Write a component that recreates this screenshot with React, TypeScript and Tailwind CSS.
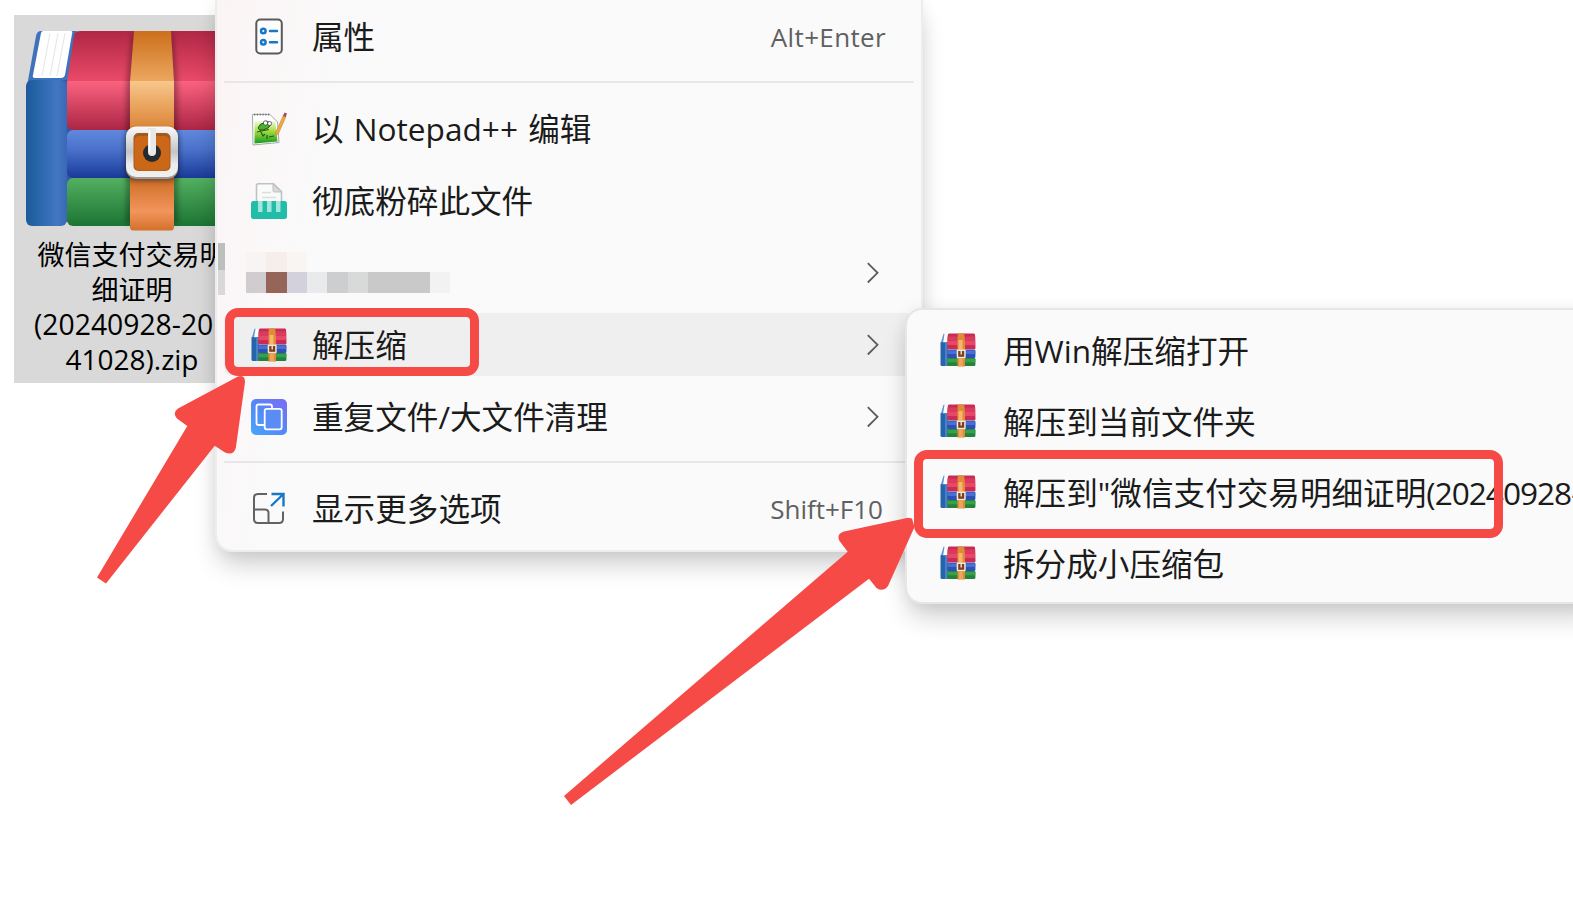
import { ReactNode } from "react";
import clsx from "clsx";

type IconProps = {
  className?: string;
};

type MenuRowProps = {
  icon: ReactNode;
  children: ReactNode;
  shortcut?: ReactNode;
  submenu?: boolean;
  active?: boolean;
};

const ArchiveLarge = () => (
  <svg width="212" height="200" viewBox="26 31 212 200" className="block">
    <defs>
      <linearGradient id="lg-spine" x1="0" x2="1" y1="0" y2="0">
        <stop offset="0" stopColor="#1c5a9c" />
        <stop offset="0.35" stopColor="#2a68ad" />
        <stop offset="0.75" stopColor="#4376c2" />
        <stop offset="1" stopColor="#3a69b4" />
      </linearGradient>
      <linearGradient id="lg-red-top" x1="0" x2="0" y1="0" y2="1">
        <stop offset="0" stopColor="#b02746" />
        <stop offset="1" stopColor="#ea4b68" />
      </linearGradient>
      <linearGradient id="lg-red" x1="0" x2="0" y1="0" y2="1">
        <stop offset="0" stopColor="#fb637f" />
        <stop offset="1" stopColor="#ac2545" />
      </linearGradient>
      <linearGradient id="lg-blue" x1="0" x2="0" y1="0" y2="1">
        <stop offset="0" stopColor="#6088dc" />
        <stop offset="0.4" stopColor="#4a72cc" />
        <stop offset="1" stopColor="#1a3a9a" />
      </linearGradient>
      <linearGradient id="lg-green" x1="0" x2="0" y1="0" y2="1">
        <stop offset="0" stopColor="#53b061" />
        <stop offset="1" stopColor="#1c7433" />
      </linearGradient>
      <linearGradient id="lg-band-top" x1="0" x2="0" y1="0" y2="1">
        <stop offset="0" stopColor="#cc6f1c" />
        <stop offset="1" stopColor="#eca860" />
      </linearGradient>
      <linearGradient id="lg-band" x1="0" x2="0" y1="0" y2="1">
        <stop offset="0" stopColor="#f9c68c" />
        <stop offset="1" stopColor="#d98232" />
      </linearGradient>
      <linearGradient id="lg-band-low" x1="0" x2="0" y1="0" y2="1">
        <stop offset="0" stopColor="#cc6a22" />
        <stop offset="0.65" stopColor="#f2955c" />
        <stop offset="1" stopColor="#d4702a" />
      </linearGradient>
      <linearGradient id="lg-buckle" x1="0" x2="0" y1="0" y2="1">
        <stop offset="0" stopColor="#fafafa" />
        <stop offset="0.5" stopColor="#c4c4c4" />
        <stop offset="0.75" stopColor="#ececec" />
        <stop offset="1" stopColor="#f0f0f0" />
      </linearGradient>
      <filter id="lg-soft" x="-30%" y="-30%" width="160%" height="160%">
        <feGaussianBlur stdDeviation="2.5" />
      </filter>
    </defs>
    <path d="M41 31H77L72 90L66 222L60 226L27 86L36 36Q37 31 41 31Z" fill="#3f72bd" />
    <path d="M60 80H76V222H60Z" fill="#2f5aa8" />
    <rect x="26" y="80" width="41" height="146" rx="6" fill="url(#lg-spine)" />
    <path d="M43 31H71Q73 31 72 34L65 75Q64 78 61 78H35Q32 78 33 75L41 33Q42 31 43 31Z" fill="#fff" />
    <path d="M50 33L42 76M58 33L50 76M65 33L57 76" stroke="#e4e4ea" strokeWidth="1" />
    <path d="M80 31H238V82H67L74 36Q75 31 80 31Z" fill="url(#lg-red-top)" />
    <path d="M67 81H238V130H73Q67 130 67 123Z" fill="url(#lg-red)" />
    <rect x="67" y="130" width="171" height="48" rx="6" fill="url(#lg-blue)" />
    <rect x="67" y="178" width="171" height="48" rx="6" fill="url(#lg-green)" />
    <path d="M132 33H173L178 82V224H126V82Z" fill="#000" opacity="0.28" filter="url(#lg-soft)" />
    <path d="M134 31H171L174 82H130Z" fill="url(#lg-band-top)" />
    <rect x="130" y="81" width="44" height="50" fill="url(#lg-band)" />
    <path d="M130 176H174V227Q174 230.500 171 230.500H133Q130 230.500 130 227Z" fill="url(#lg-band-low)" />
    <rect x="125" y="130" width="54" height="51" rx="10" fill="#222" opacity="0.55" filter="url(#lg-soft)" />
    <rect x="126" y="127" width="52" height="52" rx="10" fill="#9a9a9a" />
    <rect x="126" y="126.500" width="52" height="50.500" rx="10" fill="url(#lg-buckle)" />
    <rect x="133.500" y="133" width="37" height="38" rx="5" fill="#a35a22" />
    <rect x="134.500" y="136" width="35" height="34.500" rx="5" fill="#cb6817" />
    <circle cx="152" cy="153" r="9" fill="#242a30" />
    <path d="M148 128H156V152A4 4 0 0 1 148 152Z" fill="#e8e8e8" />
    <path d="M149.500 130V152" stroke="#fff" strokeWidth="1.500" />
  </svg>
);

const ArchiveIcon = ({ className }: IconProps) => (
  <svg width="36" height="34" viewBox="0 0 36 34" className={className}>
    <path d="M2.700 9.500L4.600 1H9.500L7.500 10Z" fill="#fdfeff" />
    <path d="M0.800 10L3.500 0.800H4.500L3 10Z" fill="#5c93cf" />
    <path d="M0.500 9.300H8V33H2Q0.500 33 0.500 31.500Z" fill="#2465ae" />
    <path d="M5 9.300H8V33H5Z" fill="#4c80c4" />
    <path d="M9 0.500H34Q35 0.500 35 2L35.500 15Q35.500 16.500 34 16.500H9Q7.200 16.500 7.200 15L7.800 2Q8 0.500 9 0.500Z" fill="#c82c54" />
    <path d="M7.400 7.500H35.200V12H7.300Z" fill="#e84767" />
    <path d="M7.600 3.500H35.200V7.500H7.400Z" fill="#da3a5c" />
    <rect x="7.200" y="16.700" width="28.200" height="8.400" rx="1.300" fill="#2c50b4" />
    <rect x="7.500" y="17.500" width="27.800" height="3.500" fill="#4670d4" />
    <rect x="7.200" y="25" width="28.200" height="8" rx="1.300" fill="#23833c" />
    <rect x="7.500" y="25.800" width="27.800" height="3.500" fill="#36a04b" />
    <path d="M17.800 0.500H24.200L25 9V33.500H17.400V9Z" fill="#e28b37" />
    <path d="M18.600 7H22.500V16.500H18.600Z" fill="#f7b56d" />
    <path d="M19 26H22.800V33H19Z" fill="#f1a35d" />
    <rect x="16.700" y="16.600" width="9" height="8.600" rx="1" fill="#f4e8da" />
    <rect x="18.200" y="18" width="6" height="5.800" fill="#7d3f1c" />
    <path d="M21.200 17.500V21.500" stroke="#efe7de" strokeWidth="1.400" />
  </svg>
);

const PropertiesIcon = () => (
  <svg width="36" height="38" viewBox="0 0 36 38" fill="none">
    <rect x="5.300" y="1.500" width="25.500" height="34" rx="4" fill="#fdfdfd" stroke="#5a5a5a" strokeWidth="2" />
    <g stroke="#1878c8" strokeWidth="2.500">
      <circle cx="12.300" cy="13" r="2.300" />
      <circle cx="12.300" cy="24.200" r="2.300" />
      <path d="M19 13H26M19 24.200H26" strokeLinecap="round" />
    </g>
  </svg>
);

const NotepadIcon = () => (
  <svg width="36" height="36" viewBox="0 0 36 36" fill="none">
    <defs>
      <linearGradient id="np-grass" x1="0" x2="0" y1="0" y2="1">
        <stop offset="0" stopColor="#f4fae0" />
        <stop offset="0.45" stopColor="#a7dc3f" />
        <stop offset="1" stopColor="#159a22" />
      </linearGradient>
    </defs>
    <path d="M1.500 3.500H19L26.500 11L28 31.500L2 34Z" fill="#fff" stroke="#a3a8ad" />
    <path d="M3 3.500H19" stroke="#777" strokeWidth="1.800" strokeDasharray="1.200 1.600" />
    <path d="M3.500 10H24.500L26.500 30.500L3.500 32.500Z" fill="url(#np-grass)" />
    <path d="M7 17Q9 12 13 12L15 10L19 12Q20 15 17 17L12 19Q8 20 7 17Z" fill="#48b52d" stroke="#24551b" />
    <circle cx="14.500" cy="12" r="2.200" fill="#fff" stroke="#333" strokeWidth="0.700" />
    <circle cx="18.600" cy="12.500" r="2" fill="#fff" stroke="#333" strokeWidth="0.700" />
    <path d="M6 21L18 18.500M9 19L12 25L14 23M16 24V28M18 26L23 25" stroke="#1f601b" strokeWidth="1.200" />
    <path d="M24.500 22L32.500 4L35 5.500L27.500 22.500L25 25Z" fill="#f1a93a" stroke="#b98845" strokeWidth="0.600" />
    <path d="M32 5L33.500 1.500L36 2.500L34.600 6Z" fill="#a04c58" />
  </svg>
);

const ShredIcon = () => (
  <svg width="36" height="36" viewBox="0 0 36 36" fill="none">
    <path d="M5.500 19V2.500Q5.500 0.800 7.200 0.800H22.500L30.500 8.500V19Z" fill="#fafafa" stroke="#bfc2c2" strokeWidth="1.600" />
    <path d="M22 1V7.500Q22 9 23.500 9H30.500Z" fill="#d8dada" stroke="#bfc2c2" />
    <path d="M11 9.500H20M11 14.500H25" stroke="#dcdede" strokeWidth="1.500" />
    <rect y="18" width="36" height="18" rx="2.500" fill="#22bda9" />
    <path d="M7 18H11.500V29H7ZM16 18H20.500V29H16ZM25 18H29.500V29H25Z" fill="#a4e6dc" />
  </svg>
);

const DuplicateIcon = () => (
  <svg width="36" height="36" viewBox="0 0 36 36" fill="none">
    <defs>
      <linearGradient id="dup-bg" x1="1" x2="0" y1="0" y2="1">
        <stop offset="0" stopColor="#7c6cf2" />
        <stop offset="0.5" stopColor="#5587f8" />
        <stop offset="1" stopColor="#4aa6fb" />
      </linearGradient>
    </defs>
    <rect width="36" height="36" rx="5" fill="url(#dup-bg)" />
    <path d="M13 26H7.500Q5.500 26 5.500 24V7.500Q5.500 5.500 7.500 5.500H19Q21 5.500 21 7.500V9" stroke="#fff" strokeWidth="1.800" />
    <rect x="13.700" y="9.800" width="17" height="20.500" rx="2" fill="#5a8cf6" stroke="#fff" strokeWidth="1.800" />
  </svg>
);

const MoreIcon = () => (
  <svg width="36" height="36" viewBox="0 0 36 36" fill="none" strokeWidth="2">
    <path
      d="M16 3H7Q3 3 3 7V28Q3 32 7 32H28Q32 32 32 28V20.500M3 18.500H14Q17.500 18.500 17.500 22V32"
      stroke="#626262"
    />
    <path d="M20.500 3H32.500V15.500M32.500 3L20 15" stroke="#1878c8" strokeWidth="2.400" />
  </svg>
);

const Chevron = () => (
  <svg width="12" height="22" viewBox="0 0 12 22" fill="none" className="mr-[35px]">
    <path d="M0.800 1.200L10.500 10.800L0.800 20.500" stroke="#5c5c5c" strokeWidth="1.800" />
  </svg>
);

const MenuRow = ({ icon, children, shortcut, submenu, active }: MenuRowProps) => (
  <div
    className={clsx(
      "flex items-center mx-[7px] mt-1 mb-[5px] h-[63px] pl-[27px] rounded-lg",
      active && "bg-[#efefef]"
    )}
  >
    <div className="flex justify-center w-9 mr-[25px] shrink-0">{icon}</div>
    <div className="grow whitespace-nowrap">{children}</div>
    {shortcut}
    {submenu && <Chevron />}
  </div>
);

const Separator = () => (
  <div className="mx-[7px] mt-[8px] mb-[10px] h-[2px] shrink-0 bg-[#e7e7e7]" />
);

// hidden entry, every block is 20px wide
const MosaicRow = () => (
  <div className="flex items-center h-[72px]">
    <div className="flex flex-col w-[7px] ml-[1px] mt-[-9px]">
      <div className="h-[27px] bg-[#bbbfbd]" />
      <div className="h-[25px] bg-[#d7d8d7]" />
    </div>
    <div className="ml-[21px] flex flex-col grow mt-[-2px]">
      <div className="flex h-5">
        <div className="w-5 bg-[#f8f4f3]" />
        <div className="w-[21px] bg-[#f6eeea]" />
        <div className="w-5 bg-[#f8f5f3]" />
      </div>
      <div className="flex h-[21px]">
        <div className="w-5 bg-[#d0ccd0]" />
        <div className="w-[21px] bg-[#956559]" />
        <div className="w-5 bg-[#d3d2dc]" />
        <div className="w-5 bg-[#e9eaeb]" />
        <div className="w-[21px] bg-[#cdcecf]" />
        <div className="w-5 bg-[#d8d9d9]" />
        <div className="w-[62px] bg-[#c9c9ca]" />
        <div className="w-5 bg-[#f2f2f3]" />
      </div>
    </div>
    <Chevron />
    <div className="w-[7px]" />
  </div>
);

const DesktopFile = () => (
  <div className="absolute left-[14px] top-[15px] w-[236px] h-[368px] pt-4 bg-[#d9d9d9] text-black">
    <div className="flex justify-center">
      <ArchiveLarge />
    </div>
    <div className="mt-[7px] flex flex-col items-center text-[27px] leading-[34.600px] whitespace-nowrap">
      <div>微信支付交易明</div>
      <div>细证明</div>
      <div className="self-start pl-[20px] text-[28.300px]">(20240928-20</div>
      <div className="text-[28px]">41028).zip</div>
    </div>
  </div>
);

const ContextMenu = () => (
  <div className="absolute left-[215px] top-0 w-[708px] h-[552px] flex flex-col rounded-b-[17px] border-2 border-t-0 border-[#ededed] bg-[#fafafa] bg-[linear-gradient(100deg,#fbf4f5_0%,#fafafa_18%)] shadow-[0_16px_26px_-4px_rgba(0,0,0,0.2),0_0_16px_rgba(0,0,0,0.06)]">
    <div className="flex flex-col h-[73px] pt-[1px]">
      <MenuRow
        icon={<PropertiesIcon />}
        shortcut={
          <div className="mr-[28px] mt-[2px] text-[26px] tracking-[0.350px] text-[#606060]">
            Alt+Enter
          </div>
        }
      >
        属性
      </MenuRow>
    </div>
    <Separator />
    <MenuRow icon={<NotepadIcon />}>
      <span className="[word-spacing:2px]">以 Notepad++ 编辑</span>
    </MenuRow>
    <MenuRow icon={<ShredIcon />}>彻底粉碎此文件</MenuRow>
    <MosaicRow />
    <MenuRow icon={<ArchiveIcon />} submenu active>
      解压缩
    </MenuRow>
    <MenuRow icon={<DuplicateIcon />} submenu>
      重复文件/大文件清理
    </MenuRow>
    <Separator />
    <MenuRow
      icon={<MoreIcon />}
      shortcut={<div className="mr-[31px] mt-[2px] text-[26px] text-[#606060]">Shift+F10</div>}
    >
      显示更多选项
    </MenuRow>
  </div>
);

const items = [
  { label: "用Win解压缩打开" },
  { label: "解压到当前文件夹" },
  { label: '解压到"微信支付交易明细证明', suffix: "(20240928-" },
  { label: "拆分成小压缩包" },
];

const SubMenu = () => (
  <div className="absolute left-[905px] top-[308px] w-[700px] h-[296px] pt-[5px] rounded-[17px] border-2 border-[#e6e6e6] bg-[#fafafa] shadow-[0_16px_26px_-4px_rgba(0,0,0,0.2),0_0_16px_rgba(0,0,0,0.06)]">
    {items.map((item) => (
      <div key={item.label} className="flex items-center h-[71px] pl-[33px]">
        <ArchiveIcon className="mr-[27px] mb-[2px] shrink-0" />
        <div className="whitespace-nowrap">
          {item.label}
          {item.suffix && <span className="tracking-[-1px]">{item.suffix}</span>}
        </div>
      </div>
    ))}
  </div>
);

const Annotations = () => (
  <>
    <div className="absolute left-[225px] top-[308px] w-[254px] h-[68px] rounded-[13px] border-[9px] border-[#f64a46]" />
    <div className="absolute left-[914px] top-[450px] w-[589px] h-[88px] rounded-[13px] border-[9px] border-[#f64a46]" />
    <svg width="1573" height="905" className="absolute left-0 top-0" fill="#f64a46">
      <path d="M97 577.500L106 583.500L214.700 445.700L225 452.500Q233.500 456 235.800 448L245 382Q245 374 238 376.500L178 408.500Q172 413 177 418.500L187.300 426Z" />
      <path d="M564 796L571 805L869 578.700L876.500 588Q883 592.500 888 586L914.500 527L912 518.500L908 517.700L844 531.500Q836 534 839.500 541L847.700 551.700Z" />
    </svg>
  </>
);

const App = () => {
  return (
    <div className="relative w-[1573px] h-[905px] overflow-hidden bg-white font-['Open_Sans','Noto_Sans_CJK_SC',sans-serif] text-[31.600px] text-[#1b1b1b]">
      <DesktopFile />
      <ContextMenu />
      <SubMenu />
      <Annotations />
    </div>
  );
};

export default App;
